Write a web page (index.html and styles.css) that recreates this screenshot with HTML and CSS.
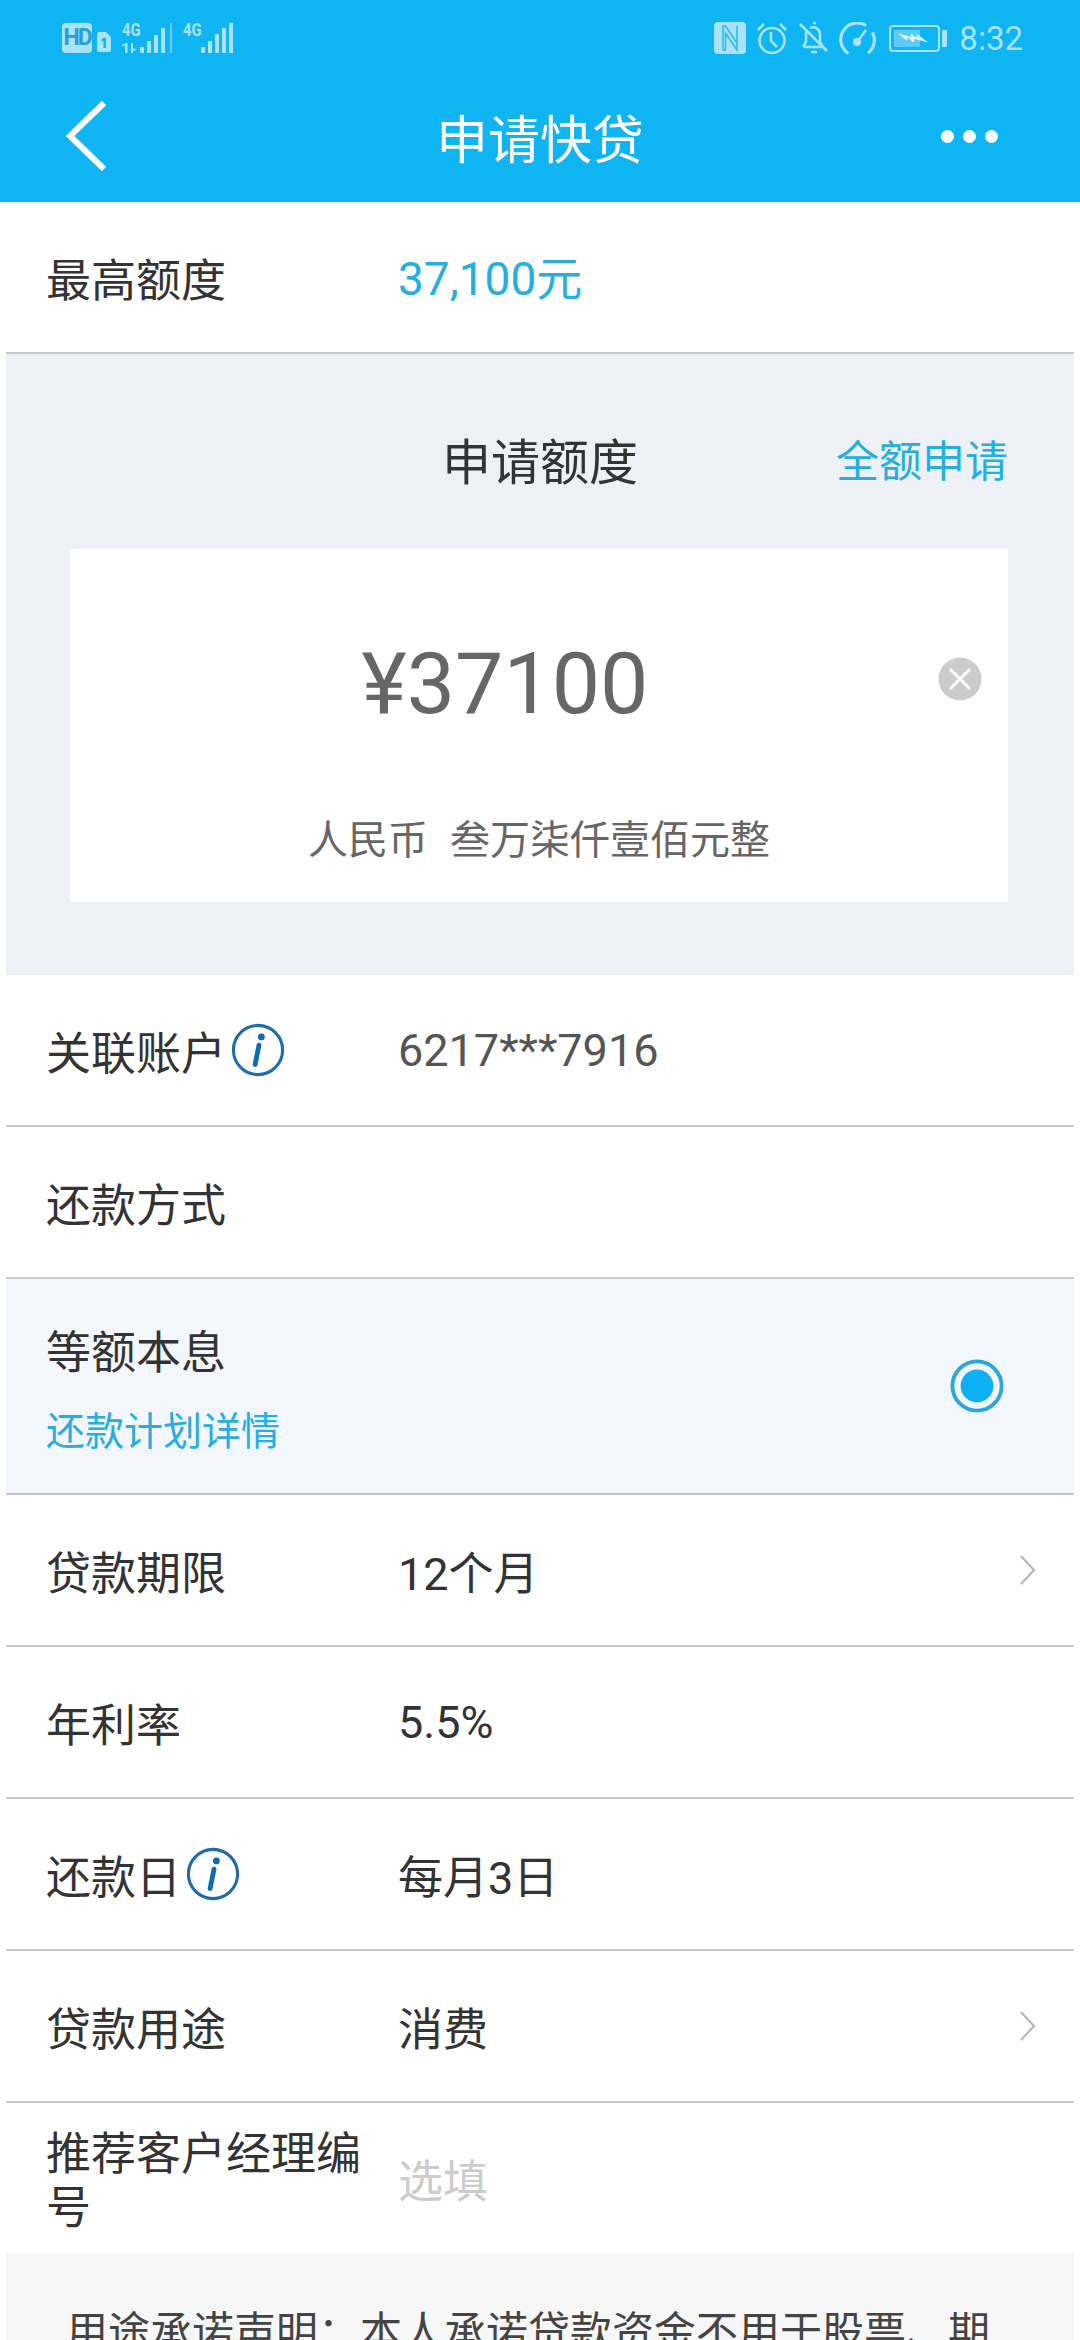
FILE: index.html
```html
<!DOCTYPE html>
<html lang="zh">
<head>
<meta charset="utf-8">
<title>申请快贷</title>
<link rel="stylesheet" href="styles.css">
</head>
<body>
<div class="screen">
  <header class="top">
    <div class="status">
      <div class="status-left">
        <span class="hd">HD</span>
        <svg class="sim" width="14" height="20" viewBox="0 0 14 20"><path d="M2 0h7l5 5v13a2 2 0 0 1-2 2H2a2 2 0 0 1-2-2V2a2 2 0 0 1 2-2z" fill="#a9e3fb"/><path d="M6.500 6h2.400v10H6.500V8.600L4.500 9.400V7.400z" fill="#0eb5f2"/></svg>
        <div class="net">
          <span class="net-label">4G</span>
          <svg width="50" height="30" viewBox="0 0 50 30" class="bars"><g fill="#a9e3fb"><path d="M3 30V22L0 24v-2l4-2h1.500v10zM9 30V20h2v5l4 2-4 1v2z"/><rect x="18" y="24" width="4" height="6"/><rect x="25" y="18" width="4" height="12"/><rect x="32" y="12" width="4" height="18"/><rect x="39" y="5" width="4" height="25"/></g><rect x="48" y="0" width="2" height="30" fill="#5fcdf8"/></svg>
        </div>
        <div class="net net-b">
          <span class="net-label">4G</span>
          <svg width="51" height="30" viewBox="0 0 51 30" class="bars"><g fill="#a9e3fb"><rect x="18" y="24" width="4" height="6"/><rect x="25" y="18" width="4" height="12"/><rect x="32" y="11" width="4" height="19"/><rect x="39" y="5" width="4" height="25"/><rect x="46" y="0" width="4" height="30"/></g></svg>
        </div>
      </div>
      <div class="status-right">
        <svg width="32" height="32" viewBox="0 0 32 32"><rect width="32" height="32" rx="4" fill="#a9e3fb"/><path d="M9 28V4h2.500L23 21V4M9 28h2.500V11L23 28V21" fill="none" stroke="#2eb6f0" stroke-width="1.500"/></svg>
        <svg width="32" height="33" viewBox="0 0 32 33" fill="none" stroke="#a9e3fb" stroke-width="2.600"><circle cx="16" cy="18.500" r="12.500"/><path d="M15 10v9l6 6M2 8l6-6M30 8l-6-6"/></svg>
        <svg class="bell" width="30" height="34" viewBox="0 0 30 34" fill="none" stroke="#a9e3fb" stroke-width="2.600"><path d="M5 26h19l-3-5v-8a7 7 0 0 0-10-6M8 9c-.8 1.200-1 2.600-1 4v8l-3 5M12 31h6M14 2h3M1 3l27 27"/></svg>
        <svg class="gauge" width="38" height="33" viewBox="0 0 38 33" fill="none" stroke="#a9e3fb" stroke-width="3.200"><path d="M9.500 31.500A16.500 16.500 0 0 1 27 3.500M33.500 10.500a16.500 16.500 0 0 1-4.500 20.500"/><path d="M19 19L27 8" stroke-width="2.500"/><circle cx="18" cy="20" r="2.500" fill="#a9e3fb"/></svg>
        <div class="battery"><div class="cell"><div class="fill"></div><svg class="bolt" width="32" height="14" viewBox="0 0 36 14"><path d="M0 2l14 4 1-4 5 5 2-4 12 9-15-4-2 4-6-6-1 4z" fill="#e8f8ff"/></svg></div><div class="nub"></div></div>
        <span class="time">8:32</span>
      </div>
    </div>
    <div class="nav">
      <svg class="back" width="42" height="72" viewBox="0 0 42 72" fill="none" stroke="#fff" stroke-width="6"><path d="M39 3L5 36l34 33"/></svg>
      <h1 class="title">申请快贷</h1>
      <div class="more"><i></i><i></i><i></i></div>
    </div>
  </header>
  <main class="content">
    <div class="row">
      <span class="label">最高额度</span>
      <span class="value accent">37,100元</span>
    </div>
    <section class="apply">
      <div class="apply-head">
        <span class="apply-title">申请额度</span>
        <span class="apply-all">全额申请</span>
      </div>
      <div class="amount-card">
        <div class="amount-line">
          <span class="amount">¥37100</span>
          <svg class="clear" width="44" height="44" viewBox="0 0 44 44"><circle cx="22" cy="22" r="21.500" fill="#cccccc"/><path d="M12 12l20 20M32 12L12 32" stroke="#fff" stroke-width="3"/></svg>
        </div>
        <div class="amount-words"><span>人民币</span><span>叁万柒仟壹佰元整</span></div>
      </div>
    </section>
    <div class="row">
      <span class="label">关联账户<svg class="info" width="54" height="54" viewBox="0 0 56 56"><circle cx="28" cy="28" r="25.500" fill="none" stroke="#1f6ca8" stroke-width="3.200"/><circle cx="31.500" cy="14.500" r="3.500" fill="#1169ae"/><path d="M29 23l-4 20" stroke="#1169ae" stroke-width="5" stroke-linecap="round" fill="none"/></svg></span>
      <span class="value muted">6217***7916</span>
    </div>
    <div class="row"><span class="label">还款方式</span></div>
    <div class="row plan">
      <div class="plan-text">
        <span class="label">等额本息</span>
        <span class="plan-link">还款计划详情</span>
      </div>
      <svg width="54" height="54" viewBox="0 0 56 56"><circle cx="28" cy="28" r="25.500" fill="none" stroke="#2ba8d8" stroke-width="4"/><circle cx="28" cy="28" r="17" fill="#0db1f3"/></svg>
    </div>
    <div class="row">
      <span class="label">贷款期限</span><span class="value">12个月</span>
      <svg class="chev" width="16" height="30" viewBox="0 0 16 30" fill="none" stroke="#b4b4b4" stroke-width="2"><path d="M1 1l13 14L1 29"/></svg>
    </div>
    <div class="row"><span class="label">年利率</span><span class="value">5.5%</span></div>
    <div class="row">
      <span class="label">还款日<svg class="info" width="54" height="54" viewBox="0 0 56 56"><circle cx="28" cy="28" r="25.500" fill="none" stroke="#1f6ca8" stroke-width="3.200"/><circle cx="31.500" cy="14.500" r="3.500" fill="#1169ae"/><path d="M29 23l-4 20" stroke="#1169ae" stroke-width="5" stroke-linecap="round" fill="none"/></svg></span>
      <span class="value">每月3日</span>
    </div>
    <div class="row">
      <span class="label">贷款用途</span><span class="value">消费</span>
      <svg class="chev" width="16" height="30" viewBox="0 0 16 30" fill="none" stroke="#b4b4b4" stroke-width="2"><path d="M1 1l13 14L1 29"/></svg>
    </div>
    <div class="row last">
      <span class="label wrap">推荐客户经理编号</span>
      <span class="value hint">选填</span>
    </div>
    <p class="notice">用途承诺声明<span class="colon">：</span>本人承诺贷款资金不用于股票、期</p>
  </main>
</div>
</body>
</html>
```

FILE: styles.css
```css
* { box-sizing: border-box; }
html, body { margin: 0; padding: 0; background: #fff; }
body { font-family: "Roboto", "Noto Sans CJK SC", sans-serif; color: #333; }
.screen { width: 1080px; height: 2340px; overflow: hidden; display: flex; flex-direction: column; }
.top { height: 202px; background: #0eb5f2; flex: none; }
.status { height: 72px; display: flex; justify-content: space-between; align-items: center; padding: 4px 57px 0 62px; }
.status-left, .status-right { display: flex; align-items: center; }
.status-left { gap: 5px; }
.status-right { gap: 10px; }
.hd { width: 30px; height: 30px; border-radius: 4px; background: #a9e3fb; color: #2a9fd6; font: 700 23px/30px "Roboto", sans-serif; text-align: center; letter-spacing: -2px; }
.sim { margin-top: 8px; }
.net { position: relative; width: 50px; height: 30px; margin-left: 6px; }
.net-b { width: 51px; }
.net-label { position: absolute; left: 0; top: -3px; color: #a9e3fb; font: 700 19px/19px "Roboto", sans-serif; transform: scaleX(.78); transform-origin: left center; }
.bars { position: absolute; left: 0; bottom: 0; }
.bell { margin-left: 1px; }
.gauge { margin-right: 2px; }
.battery { display: flex; align-items: center; gap: 2px; }
.cell { position: relative; width: 51px; height: 27px; border: 2px solid #a9e3fb; border-radius: 4px; padding: 3px; }
.fill { width: 62%; height: 100%; background: #5ccbf8; }
.bolt { position: absolute; left: 7px; top: 4px; }
.nub { width: 5px; height: 17px; background: #a9e3fb; border-radius: 1px; }
.time { color: #a9e3fb; font-size: 33px; margin-left: 2px; }
.nav { height: 130px; display: flex; align-items: center; justify-content: space-between; padding: 0 82px 0 65px; position: relative; }
.back { margin-top: -2px; }
.title { position: absolute; left: 0; right: 0; margin: 0 0 2px; text-align: center; color: #fff; font-size: 52px; font-weight: 400; pointer-events: none; }
.more { display: flex; gap: 9px; margin-top: -2px; }
.more i { width: 13px; height: 13px; border-radius: 50%; background: #fff; display: block; }
.content { margin: 0 6px; flex: 1; min-height: 0; }
.row { height: 152px; border-bottom: 2px solid #c8c8c8; display: flex; align-items: center; padding: 0 34px 0 40px; position: relative; }
.label { width: 352px; flex: none; font-size: 45px; color: #333; display: flex; align-items: center; }
.value { font-size: 45px; color: #333; }
.muted { color: #555; }
.accent { color: #25aee0; font-size: 46px; padding-bottom: 4px; }
.info { margin-left: 5px; flex: none; }
.apply { height: 621px; background: #edf1f5; padding: 0 60px; position: relative; }
.apply-head { height: 195px; display: flex; align-items: center; justify-content: center; position: relative; padding-top: 13px; }
.apply-title { font-size: 49px; color: #333; }
.apply-all { position: absolute; right: 6px; font-size: 43px; color: #25aee0; }
.amount-card { height: 353px; background: #fff; margin: 0 6px 0 4px; }
.amount-line { height: 259px; position: relative; display: flex; align-items: center; justify-content: center; padding: 9px 0 0; }
.amount { font-size: 86px; color: #666; margin-right: 68px; }
.clear { position: absolute; right: 26px; top: 108px; }
.amount-words { display: flex; gap: 22px; justify-content: center; font-size: 40px; color: #666; }
.plan { height: 216px; background: #f3f6fb; justify-content: space-between; padding: 0 70px 0 40px; border-bottom-color: #bcc2c8; }
.plan-text { display: flex; flex-direction: column; gap: 18px; }
.plan-link { font-size: 39px; color: #25aee0; }
.chev { position: absolute; right: 38px; }
.last { height: 150px; border-bottom: 0; }
.wrap { display: block; line-height: 54px; width: 330px; margin-right: 22px; padding-top: 8px; }
.hint { color: #ccc; }
.notice { margin: 0; background: #f7f7f7; padding: 46px 60px; font-size: 42px; line-height: 60px; color: #444; height: 400px; white-space: nowrap; overflow: hidden; }
.colon { font-family: "Noto Sans CJK TC", sans-serif; }
```
